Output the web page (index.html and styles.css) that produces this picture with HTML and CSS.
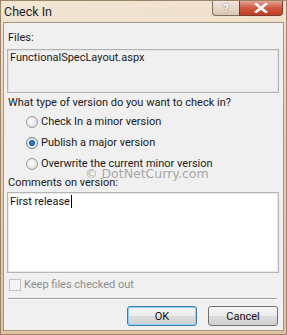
FILE: index.html
```html
<!DOCTYPE html>
<html>
<head>
<meta charset="utf-8">
<link rel="stylesheet" href="styles.css">
</head>
<body>
<div class="window">
  <div class="titlebar">
    <span class="title">Check In</span>
    <div class="tbtns">
      <div class="tbtn help">?</div>
      <div class="tbtn close">
        <svg width="14" height="10" viewBox="0 0 14 10"><path d="M2 1 L12 9 M12 1 L2 9" stroke="#fff" stroke-width="2.6" stroke-linecap="square"/></svg>
      </div>
    </div>
  </div>
  <div class="client">
    <div class="label">Files:</div>
    <div class="filebox">FunctionalSpecLayout.aspx</div>
    <div class="label q">What type of version do you want to check in?</div>
    <div class="radios">
      <div class="radio"><span class="rb"></span>Check In a minor version</div>
      <div class="radio"><span class="rb on"></span>Publish a major version</div>
      <div class="radio"><span class="rb"></span>Overwrite the current minor version</div>
    </div>
    <div class="label c">Comments on version:</div>
    <div class="textarea">First release<span class="caret"></span></div>
    <div class="check"><span class="cb"></span>Keep files checked out</div>
    <div class="sep"></div>
    <div class="buttons">
      <div class="btn ok">OK</div>
      <div class="btn">Cancel</div>
    </div>
  </div>
  <div class="wm">© DotNetCurry.com</div>
</div>
</body>
</html>
```
FILE: styles.css
```css
html, body { margin: 0; padding: 0; }
body { font-family: Roboto, "Noto Sans", sans-serif; font-size: 11px; color: #1a1a1a; }
.window {
  position: relative;
  width: 287px; height: 335px; box-sizing: border-box;
  background: linear-gradient(175deg, #f3e6d6 0%, #e8cfb2 40%, #dec19f 100%);
  border: 1px solid #9c8468;
  display: flex; flex-direction: column;
}
.titlebar { height: 21px; flex: none; display: flex; align-items: flex-start; }
.title { font-size: 12.5px; line-height: 14px; color: #1e1e1e; margin: 4px 0 0 3px; }
.tbtns { margin-left: auto; display: flex; margin-right: 3px; }
.tbtn { height: 15px; border: 1px solid #7e6d5c; border-top: none; box-sizing: border-box; display: flex; align-items: center; justify-content: center; }
.help { width: 27px; border-radius: 0 0 0 4px; background: linear-gradient(#f2e7dc, #d9c7b4); color: #fff; font-weight: bold; font-size: 11px; text-shadow: 0 0 2px #6b5a48; border-right: none; }
.close { width: 44px; border-radius: 0 0 4px 0; background: linear-gradient(#e3a395 0%, #cf5a42 50%, #c13b22 100%); border-color: #7a3a2c; }
.client {
  flex: 1; margin: 0 2px 3px 2px;
  background: #f0f0f0; border: 1px solid #a8957f;
  padding: 0 4px 0 3px;
  display: flex; flex-direction: column;
}
.label { margin: 8px 0 0 1px; line-height: 14px; }
.filebox { margin: 4px 0 0 0; height: 44px; box-sizing: border-box; border: 1px solid #b3b3b3; box-shadow: inset 0 0 0 1px #e4e4e4; background: #f0f0f0; padding: 1px 2px; line-height: 14px; }
.q { margin-top: 3px; }
.radios { margin: 5px 0 0 19px; display: flex; flex-direction: column; gap: 7px; }
.radio { display: flex; align-items: center; line-height: 14px; }
.rb { width: 12px; height: 12px; border-radius: 50%; border: 1px solid #9a9a9a; background: radial-gradient(circle at 40% 40%, #ffffff, #d6d6d6); margin-right: 3px; box-sizing: border-box; }
.rb.on { background: radial-gradient(circle, #3a8ee0 0, #1a5fa8 2.6px, #ececec 3.4px, #d8d8d8 100%); border-color: #6b7e93; }
.wm { position: absolute; left: 84px; top: 166px; font-family: "DejaVu Sans", sans-serif; font-size: 12.5px; color: rgba(140,140,140,0.75); line-height: 13px; }
.c { margin-top: 5px; }
.textarea { margin: 2px 0 0 0; height: 81px; box-sizing: border-box; border: 1px solid #b5b5b5; box-shadow: inset 0 0 0 1px #e8e8e8; background: #fff; padding: 2px 2px; line-height: 14px; color: #111; }
.caret { display: inline-block; width: 1px; height: 13px; background: #000; vertical-align: -3px; margin-left: 1px; }
.check { margin: 5px 0 0 2px; display: flex; align-items: center; color: #8e8e8e; line-height: 14px; }
.cb { width: 12px; height: 12px; border: 1px solid #c2c2c2; background: #f4f4f4; margin-right: 3px; box-sizing: border-box; }
.sep { margin: 6px 2px 0 1px; height: 1px; background: #a0a0a0; border-bottom: 1px solid #fff; }
.buttons { display: flex; justify-content: flex-end; gap: 11px; margin: 6px 1px 0 0; }
.btn { width: 70px; height: 20px; box-sizing: border-box; border: 1px solid #707070; border-radius: 3px; background: linear-gradient(#f4f4f4 0%, #ececec 48%, #dcdcdc 52%, #d0d0d0 100%); display: flex; align-items: center; justify-content: center; color: #111; }
.ok { border-color: #3c7fb1; box-shadow: inset 0 0 0 1px #86d3f7; }
```
